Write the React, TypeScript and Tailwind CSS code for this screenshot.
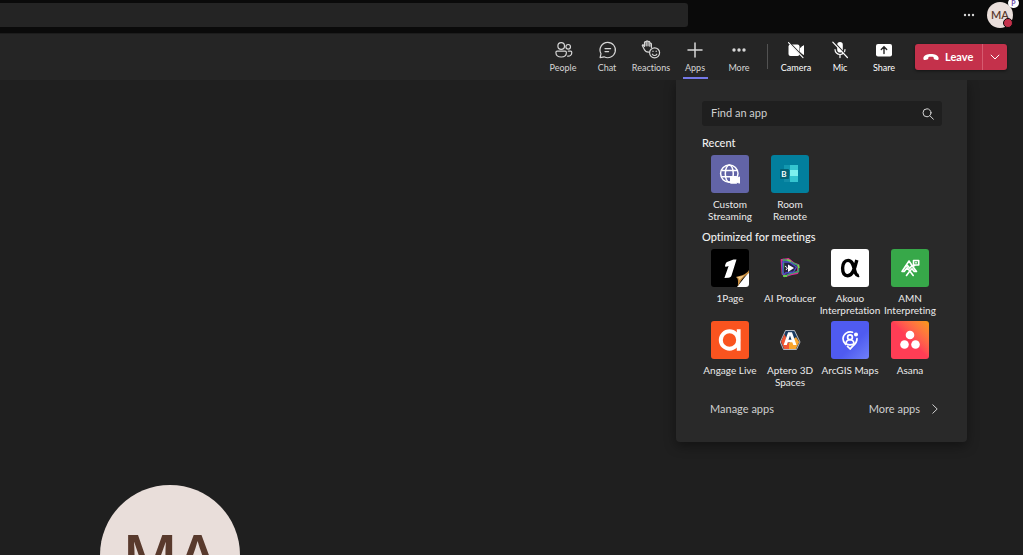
import { useState, type ReactNode } from 'react';

type ToolbarItem = { label: string; icon: ReactNode; bright?: boolean };
type AppItem = { name: string; icon: ReactNode; tile: string };

const LINE = {
  fill: 'none',
  stroke: 'currentColor',
  strokeWidth: 1.2,
  strokeLinecap: 'round' as const,
  strokeLinejoin: 'round' as const,
};

const TOOLS: ToolbarItem[] = [
  {
    label: 'People',
    icon: (
      <svg className="size-5" viewBox="0 0 20 20" {...LINE}>
        <circle cx="8.2" cy="6" r="3.3" />
        <circle cx="15.2" cy="6.8" r="2.3" />
        <path d="M4.1 11.2h8a1.3 1.3 0 0 1 1.3 1.3c0 2.7-1.9 4.500-5.200 4.500s-5.300-1.800-5.300-4.500a1.300 1.300 0 0 1 1.200-1.300z" />
        <path d="M14.7 16.2c2.300.2 4.100-1.100 4.100-3.700 0-.8-.5-1.300-1.200-1.300h-2.300" />
      </svg>
    ),
  },
  {
    label: 'Chat',
    icon: (
      <svg className="size-5" viewBox="0 0 20 20" {...LINE}>
        <path d="M10.7 2.3a7.700 7.700 0 1 1-3.600 14.500L3.100 17.700l.9-4A7.700 7.700 0 0 1 10.700 2.300z" />
        <path d="M8 8.600h5.600M8 11.600h3.600" />
      </svg>
    ),
  },
  {
    label: 'Reactions',
    icon: (
      <svg className="size-5" viewBox="0 0 20 20" {...LINE}>
        <path d="M8.6 12c-2.7.5-4.3-.5-5.3-2.5L1.400 5.800c-.4-1 .8-1.400 1.400-.4l.7 1.100V2.600c0-1.200 1.600-1.200 1.700 0v3.200V1.900c0-1.300 1.700-1.300 1.800 0v3.900-3.400c0-1.300 1.800-1.200 1.800 0v3.800-2.200c0-1.200 1.600-1.200 1.600 0v3.400" />
        <circle cx="13.6" cy="12.800" r="5" />
        <path d="M11.400 14.200c1 1.700 3.400 1.700 4.400 0M12 11.200v.3M15.200 11.200v.3" />
      </svg>
    ),
  },
  {
    label: 'Apps',
    icon: (
      <svg className="size-5" viewBox="0 0 20 20" {...LINE} strokeWidth={1.5}>
        <path d="M10 3v14M3 10h14" />
      </svg>
    ),
  },
  {
    label: 'More',
    icon: (
      <svg className="size-5" viewBox="0 0 20 20" fill="currentColor">
        <circle cx="5" cy="10" r="1.7" />
        <circle cx="10" cy="10" r="1.7" />
        <circle cx="15" cy="10" r="1.7" />
      </svg>
    ),
  },
];

const DEVICES: ToolbarItem[] = [
  {
    label: 'Camera',
    bright: true,
    icon: (
      <svg className="size-5" viewBox="0 0 20 20">
        <rect x="2.5" y="4.5" width="11" height="11.5" rx="2" fill="currentColor" />
        <path d="m14.5 8 3-2.300v8.800l-3-2.300z" fill="currentColor" stroke="currentColor" strokeLinejoin="round" />
        <path d="m3.500 2.700 14.500 15" stroke="#252525" strokeWidth="1.600" />
        <path d="m2.500 2.700 14.500 15" stroke="currentColor" strokeWidth="1.100" strokeLinecap="round" />
      </svg>
    ),
  },
  {
    label: 'Mic',
    bright: true,
    icon: (
      <svg className="size-5" viewBox="0 0 20 20">
        <rect x="7.2" y="2" width="5.6" height="10.5" rx="2.8" fill="currentColor" />
        <path d="M5 9.500a5 5 0 0 0 10 0M10 14.600v3" fill="none" stroke="currentColor" strokeWidth="1.200" strokeLinecap="round" />
        <path d="m4 2 14 15" stroke="#252525" strokeWidth="1.400" />
        <path d="m2.800 2.200 14.600 15.300" stroke="currentColor" strokeWidth="1.200" strokeLinecap="round" />
      </svg>
    ),
  },
  {
    label: 'Share',
    bright: true,
    icon: (
      <svg className="size-5" viewBox="0 0 20 20">
        <rect x="2" y="4" width="16" height="12.5" rx="2" fill="currentColor" />
        <path d="M10 13.500V7M7.300 9.500 10 6.800l2.700 2.700" fill="none" stroke="#252525" strokeWidth="1.400" strokeLinecap="round" />
      </svg>
    ),
  },
];

const RECENT: AppItem[] = [
  {
    name: 'Custom Streaming',
    tile: 'bg-[#6264a7]',
    icon: (
      <svg className="size-full" viewBox="0 0 38 38" fill="none" stroke="#fff" strokeWidth="1.5">
        <circle cx="18.3" cy="18.6" r="8.7" />
        <ellipse cx="18.3" cy="18.6" rx="4" ry="8.7" />
        <path d="M10.5 15.6h15.7M10.5 21.8h10" />
        <path d="M19.500 21.500h6.300v1.600l2.700-1.200v6.300l-2.700-1.100v1.100h-6.300z" fill="#fff" strokeWidth="1" />
      </svg>
    ),
  },
  {
    name: 'Room Remote',
    tile: 'bg-[#027f9d]',
    icon: (
      <svg className="size-full" viewBox="0 0 38 38">
        <path d="M13 10h14v5H13z" fill="#1297af" />
        <path d="M19 10h8v17h-8z" fill="#35c5d0" />
        <path d="M19 15h8v6h-8z" fill="#7df0ee" />
        <path d="M13 21h6v6h-6z" fill="#128ca7" />
        <rect x="9" y="14" width="9" height="10" rx="1" fill="#036275" />
        <text x="13" y="22" fontSize="8" fontWeight="700" textAnchor="middle" fill="#fff">B</text>
      </svg>
    ),
  },
];

const OPTIMIZED: AppItem[] = [
  {
    name: '1Page',
    tile: 'bg-black',
    icon: (
      <svg className="size-full" viewBox="0 0 38 38">
        <path d="m16 13 6.500-2.500h3L20.700 26c-.6 1.800-1.500 2.600-3.300 2.700l-4 .2L17.600 17c-1.400.6-2.200.7-3.600.6 0-2 .8-3.700 2-4.600z" fill="#fff" />
        <path d="M38 23v15H26z" fill="#fff" />
        <path d="M38 21c-2.400 4-6.700 5.500-13 7 2 1.300 2.400 3.200 1.800 9.800 3-7.300 7-10.800 11.200-13.800z" fill="#c58a3d" />
        <path d="M25 28c2.500.6 3.400 1.600 3.500 3.500 1.400-2.200 3.500-3.600 5.200-5.500-2.300 1.200-5 1.500-8.700 2z" fill="#f2c987" />
      </svg>
    ),
  },
  {
    name: 'AI Producer',
    tile: '',
    icon: (
      <svg className="size-full" viewBox="0 0 38 38" fill="none" strokeLinejoin="round">
        <path d="m14 11 13 7-12 9z" fill="#222344" />
        <path d="m10.500 11 7-1 5 4 5 2-1 8-5 1-6 2-4-2z" stroke="#d62c93" strokeWidth="1.800" />
        <path d="m12.500 10.500 6 2 9 4v6l-8 2-6 3-2-4 1-6z" stroke="#3ea36b" strokeWidth="1.500" />
        <path d="m11.500 13 7 0 7 5-3 5-8 1-2 2-1-8z" stroke="#4e4cc4" strokeWidth="1.400" />
        <path d="m16 10.500 4 2M12 27h4M27 16l1 3" stroke="#73d846" strokeWidth="1.600" />
        <path d="m17 15.500 6 3.500-6 4z" fill="#fff" />
        <path d="m14 17 2.500 2-1.500 2" stroke="#fff" />
      </svg>
    ),
  },
  {
    name: 'Akouo Interpretation',
    tile: 'bg-white',
    icon: (
      <svg className="size-full" viewBox="0 0 38 38" fill="none" stroke="#000">
        <path d="M25.800 11c-1.400 5.500-3.300 15.800-9.100 15.800-3.400 0-5.100-3.200-5.100-7.700 0-4.700 2.200-7.700 5.500-7.700 5.500 0 5.600 8.800 7.600 13 .7 1.600 1.700 2.400 3.300 1.900" strokeWidth="3.400" />
      </svg>
    ),
  },
  {
    name: 'AMN Interpreting',
    tile: 'bg-[#37a849]',
    icon: (
      <svg className="size-full" viewBox="0 0 38 38" fill="none" stroke="#fff" strokeWidth="1.6" strokeLinejoin="round" strokeLinecap="round">
        <path d="m11 22.500 7-10.500 3 4.500M11 22.500h2.200l3-3.800 2.600 3.300-3.300 4.500" />
        <path d="m14.500 17.500 2-1 2.300 2.700 2.200-2.700 4.500 6h-2.300l-2.200-2.800-2.200 2.300 3.400 4.500" />
        <path d="M22.500 11.500h5.200V16h-3.500l-1.700 1zM25 13.500v.5" />
      </svg>
    ),
  },
  {
    name: 'Angage Live',
    tile: 'bg-[#fa541f]',
    icon: (
      <svg className="size-full" viewBox="0 0 38 38" fill="none" stroke="#fff" strokeWidth="4">
        <circle cx="18.5" cy="19" r="8.7" />
        <path d="M27.7 8.3v21.5" strokeWidth="3.8" />
      </svg>
    ),
  },
  {
    name: 'Aptero 3D Spaces',
    tile: '',
    icon: (
      <svg className="size-full" viewBox="0 0 38 38">
        <path d="m14.500 9.500 9 .1L29 21l-3.500 7.500h-13L9.300 21z" fill="#19395f" stroke="#d9dce3" strokeWidth=".8" strokeLinejoin="round" />
        <path d="m13.400 13-3.300 7.800 3 7.200h5.300v-5z" fill="#ef5633" />
        <path d="m18 22 7-6 3.200 5-3.300 7H18z" fill="#faa52d" />
        <path d="m17.100 11.300-4.500 12.600h3.200l.9-2.700h4.600l1 2.700h3.200L21 11.300zm1.900 3.200 1.500 4.200h-3z" fill="#fff" fillRule="evenodd" />
      </svg>
    ),
  },
  {
    name: 'ArcGIS Maps',
    tile: 'bg-linear-to-br from-[#4f5bf0] from-60% to-[#7180fa]',
    icon: (
      <svg className="size-full" viewBox="0 0 38 38" fill="none" stroke="#fff" strokeWidth="1.7" strokeLinecap="round" strokeLinejoin="round">
        <path d="M21.500 11.200A7.300 7.300 0 0 0 12 17.700c0 2.300 1 4 2.700 5.700M26 17.500c.3 5.200-4.200 6.900-6.800 10.500l-2.700-2.700" />
        <circle cx="19" cy="16.3" r="2.4" />
        <path d="M15 22.500c.4-5 7.500-5 8 0-2.700 2-5.300 2-8 0z" />
        <circle cx="25" cy="13.5" r="1.2" fill="#fff" />
      </svg>
    ),
  },
  {
    name: 'Asana',
    tile: 'bg-linear-to-tr from-[#ff3d55] from-50% to-[#f99a08]',
    icon: (
      <svg className="size-full" viewBox="0 0 38 38" fill="#fff">
        <circle cx="19" cy="14" r="4.3" />
        <circle cx="13.5" cy="23.5" r="4.3" />
        <circle cx="24.5" cy="23.5" r="4.3" />
      </svg>
    ),
  },
];

function ToolbarButton({ item, active, onClick }: { item: ToolbarItem; active?: boolean; onClick?: () => void }) {
  return (
    <button
      type="button"
      onClick={onClick}
      className={`flex w-11 flex-col items-center pt-1.5 ${item.bright ? 'text-white' : 'text-[#d6d6d6]'}`}
    >
      {item.icon}
      <span className="mt-0.5 text-[9px] leading-3">{item.label}</span>
      {active && <span className="mt-auto mb-px h-0.5 w-[25px] bg-[#7579e7]" />}
    </button>
  );
}

function AppGrid({ title, apps }: { title: string; apps: AppItem[] }) {
  return (
    <section>
      <h2 className="pl-0.5 text-[11px] leading-4 font-medium text-[#f0f0f0]">{title}</h2>
      <div className="mt-1 grid max-w-60 grid-cols-4 gap-y-[5px]">
        {apps.map((app) => (
          <button key={app.name} type="button" className="flex flex-col items-center">
            <span className={`size-[38px] overflow-hidden rounded-[3px] ${app.tile}`}>{app.icon}</span>
            <span className="mt-[5px] text-[10px] leading-3 text-[#ebebeb]">{app.name}</span>
          </button>
        ))}
      </div>
    </section>
  );
}

function AppsMenu() {
  return (
    <div className="absolute top-0 right-14 w-[291px] rounded-b bg-[#292929] px-6 pt-[21px] pb-[25px] shadow-[0_4px_12px_rgba(0,0,0,0.4)]">
      <label className="mr-px mb-[9px] ml-0.5 flex h-[25px] items-center rounded-[3px] bg-[#1f1f1f] pr-2 pl-[9px]">
        <input
          type="text"
          aria-label="Find an app"
          placeholder="Find an app"
          className="min-w-0 flex-1 bg-transparent text-[11px] text-white outline-none placeholder:text-[#cfcfcf]"
        />
        <svg className="size-3" viewBox="0 0 12 12" fill="none" stroke="#d6d6d6" strokeLinecap="round">
          <circle cx="5" cy="4.8" r="4" />
          <path d="m8 7.800 3.400 3.500" />
        </svg>
      </label>
      <div className="flex flex-col gap-[7px]">
        <AppGrid title="Recent" apps={RECENT} />
        <AppGrid title="Optimized for meetings" apps={OPTIMIZED} />
      </div>
      <div className="mt-[13px] flex justify-between pr-[5px] pl-2.5 text-[11px] leading-4 text-[#cfcfcf]">
        <button type="button">Manage apps</button>
        <button type="button" className="flex items-center gap-3">
          More apps
          <svg className="h-2.5 w-1.5" viewBox="0 0 6 10" fill="none" stroke="currentColor">
            <path d="m.5.5 4.700 4.500L.5 9.500" />
          </svg>
        </button>
      </div>
    </div>
  );
}

export default function App() {
  const [appsOpen, setAppsOpen] = useState(true);

  return (
    <div className="flex h-screen flex-col overflow-hidden bg-[#1f1f1f] font-['Lato','Open_Sans',sans-serif] [font-variant-ligatures:none]">
      <header className="flex h-[34px] shrink-0 items-start border-b border-[#1c1c1c] bg-[#0a0a0a]">
        <input type="text" aria-label="Search" className="mt-[3px] h-6 w-[688px] rounded-r-[3px] bg-[#242424] px-3 text-xs text-white outline-none" />
        <button type="button" aria-label="Settings and more" className="mt-1.5 mr-3 ml-auto text-[#d6d6d6]">
          <svg className="h-4 w-3" viewBox="0 0 12 16" fill="currentColor">
            <circle cx="2" cy="9" r="1.2" />
            <circle cx="6" cy="9" r="1.2" />
            <circle cx="10" cy="9" r="1.2" />
          </svg>
        </button>
        <button type="button" aria-label="Account" className="relative mt-0.5 mr-[10px] flex size-[26px] items-center justify-center rounded-full bg-[#e9deda] text-[11px] font-semibold text-[#593a2d]">
          MA
          <span className="absolute right-0 bottom-0 size-2.5 rounded-full border border-[#0a0a0a] bg-[#c4314b]" />
          <span className="absolute -top-1 -right-1.5 flex h-2.5 w-[11px] items-center justify-center rounded-full bg-white text-[7px] text-[#5b3a9e]">
            P
          </span>
        </button>
      </header>

      <nav className="flex h-[46px] shrink-0 justify-end bg-[#252525] pr-4">
        {TOOLS.map((item) => (
          <ToolbarButton
            key={item.label}
            item={item}
            active={item.label === 'Apps' && appsOpen}
            onClick={item.label === 'Apps' ? () => setAppsOpen(!appsOpen) : undefined}
          />
        ))}
        <span className="mx-1.5 mt-2.5 h-[25px] w-px bg-[#525252]" />
        {DEVICES.map((item) => (
          <ToolbarButton key={item.label} item={item} />
        ))}
        <div className="mt-2.5 ml-[9px] flex h-[26px] rounded-[3px] bg-[#c4314b] text-white shadow-[0_1px_3px_rgba(0,0,0,0.5)]">
          <button type="button" className="flex w-[67px] items-center gap-1.5 pl-2 text-[11px] font-bold">
            <svg className="h-2 w-4" viewBox="0 0 16 8" fill="currentColor">
              <path d="M8 1c3.800 0 7.200 1.300 7.600 3.900.2 1.500-.4 2.300-1.700 2.100l-2-.4c-.8-.2-1.200-.7-1.300-1.500l-.1-1C8.900 3.700 7 3.700 5.500 4.100l-.1 1c-.1.800-.5 1.300-1.300 1.500l-2 .4C.8 7.200.2 6.400.4 4.900.8 2.300 4.200 1 8 1z" />
            </svg>
            Leave
          </button>
          <button type="button" aria-label="Leave options" className="flex w-[25px] items-center justify-center border-l border-[#d65b70]">
            <svg className="h-1.5 w-2.5" viewBox="0 0 10 6" fill="none" stroke="currentColor">
              <path d="m.8.8 4.200 4.200L9.200.8" />
            </svg>
          </button>
        </div>
      </nav>

      <main className="relative min-h-0 flex-1 overflow-hidden">
        <div className="mt-[405px] ml-[100px] flex size-[140px] items-center justify-center rounded-full bg-[#e9deda] font-['Open_Sans',sans-serif] text-[60px] font-semibold text-[#593a2d]">
          MA
        </div>
        {appsOpen && <AppsMenu />}
      </main>
    </div>
  );
}
